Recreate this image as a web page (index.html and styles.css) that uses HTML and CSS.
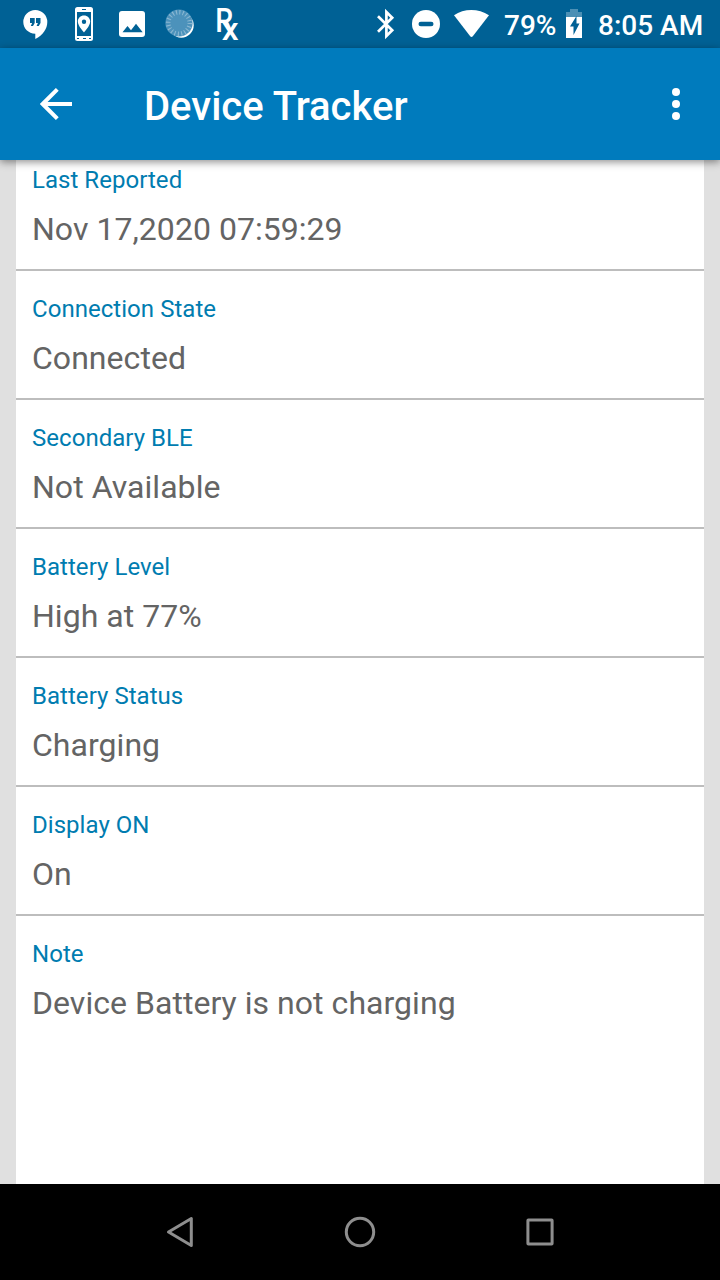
FILE: index.html
```html
<!DOCTYPE html>
<html lang="en">
<head>
<meta charset="utf-8">
<title>Device Tracker</title>
<link rel="stylesheet" href="styles.css">
</head>
<body>
<div class="screen">
  <header class="status-bar">
    <div class="notifications">
      <svg width="48" height="48" viewBox="12 0 48 48"><path fill="#fff" d="M35.300 10a12 12 0 0 0-12 12c0 6.400 5 11.500 12 11.700V39C43 35.300 47.300 28.500 47.300 22a12 12 0 0 0-12-12Z"/><path fill="#006195" d="M30 18h4.700v5l-1.700 3h-2.200l1.300-3H30Zm6 0h4.500v5l-1.700 3h-2.200l1.300-3H36Z"/></svg>
      <svg width="48" height="48" viewBox="60 0 48 48"><rect x="75" y="7" width="18" height="34" rx="2.500" fill="#fff"/><path fill="#006195" d="M77 12h14v24H77ZM82 9h4v1h-4ZM77 38h2v1h-2Zm6 0h3v1h-3Zm6 0h2v1h-2Z"/><path fill="#fff" fill-rule="evenodd" d="M84 15.500c-3.500 0-6.200 2.700-6.200 6.100C77.800 26 84 32.500 84 32.500s6.200-6.500 6.200-10.900c0-3.400-2.700-6.100-6.200-6.100Zm0 4a2.200 2.200 0 1 1 0 4.400 2.200 2.200 0 0 1 0-4.400Z"/></svg>
      <svg width="48" height="48" viewBox="108 0 48 48"><rect x="119" y="11" width="26" height="26" rx="3" fill="#fff"/><path fill="#006195" d="m122.500 32.300 5-6.400 3.500 4.300 5-6.500 6.700 8.600Z"/></svg>
      <svg width="48" height="48" viewBox="156 0 48 48"><circle cx="181.300" cy="25.300" r="12.400" fill="#fff"/><circle cx="179" cy="23" r="13.600" fill="#4c92bb"/><circle cx="179" cy="23" r="10.800" fill="none" stroke="#8bb8d2" stroke-width="4.600" stroke-dasharray="1.100 2.293"/></svg>
      <svg class="rx" width="48" height="48" viewBox="204 0 48 48"><text class="rx-r" transform="translate(215.300 32.300) scale(.84 1)">R</text><text class="rx-x" transform="translate(221.800 39.600) scale(1.080 1)">x</text></svg>
    </div>
    <div class="system">
      <svg width="44" height="48" viewBox="364 0 44 48"><path fill="none" stroke="#fff" stroke-width="2.700" d="m378 16.300 14.200 14L386.400 36V12l5.800 5.700L378 31.800"/></svg>
      <svg width="36" height="48" viewBox="408 0 36 48"><circle cx="426" cy="24" r="14" fill="#fff"/><rect x="418.500" y="21.700" width="15" height="4.600" rx="2.300" fill="#006195"/></svg>
      <svg width="60" height="48" viewBox="444 0 60 48"><path fill="#fff" d="M454 15.200C464 8.200 478.500 8.200 489 15.200L472.800 36.300q-1.300 1.400-2.600 0Z"/></svg>
      <span class="percent">79%</span>
      <svg width="34" height="48" viewBox="560 0 34 48"><path fill="#4c90b5" d="M570 9h8v3h4v5h-16v-5h4Z"/><path fill="#fff" d="M566 17h16v21h-16Z"/><path fill="#006195" d="M576.500 16 570 26.500h3.500V35l6-11.500h-3Z"/></svg>
      <span class="clock">8:05 AM</span>
    </div>
  </header>
  <div class="app-bar">
    <svg class="back" width="32" height="32" viewBox="0 0 32 32"><path fill="none" stroke="#fff" stroke-width="4" d="M32 16H4M17.300 1.400 2.700 16l14.600 14.600"/></svg>
    <h1 class="title">Device Tracker</h1>
    <svg class="more" width="8" height="32" viewBox="0 0 8 32"><g fill="#fff"><circle cx="4" cy="4" r="4"/><circle cx="4" cy="16" r="4"/><circle cx="4" cy="28" r="4"/></g></svg>
  </div>
  <main class="content">
    <dl class="details">
      <div class="row"><dt>Last Reported</dt><dd>Nov 17,2020 07:59:29</dd></div>
      <div class="row"><dt>Connection State</dt><dd>Connected</dd></div>
      <div class="row"><dt>Secondary BLE</dt><dd>Not Available</dd></div>
      <div class="row"><dt>Battery Level</dt><dd>High at 77%</dd></div>
      <div class="row"><dt>Battery Status</dt><dd>Charging</dd></div>
      <div class="row"><dt>Display ON</dt><dd>On</dd></div>
      <div class="row"><dt>Note</dt><dd>Device Battery is not charging</dd></div>
    </dl>
  </main>
  <nav class="nav-bar">
    <svg width="180" height="96" viewBox="90 0 180 96"><path d="M191.300 34.500v27L168.500 48Z"/></svg>
    <svg width="180" height="96" viewBox="270 0 180 96"><circle cx="360" cy="48" r="13.700"/></svg>
    <svg width="180" height="96" viewBox="450 0 180 96"><rect x="527.900" y="35.900" width="24.200" height="24.200" rx=".5"/></svg>
  </nav>
</div>
</body>
</html>
```
FILE: styles.css
```css
* { box-sizing: border-box; }
body { margin: 0; font-family: Roboto, sans-serif; }
svg { display: block; flex: none; }

.screen {
  display: flex;
  flex-direction: column;
  width: 720px;
  height: 1280px;
  overflow: hidden;
  background: #e0e0e0;
}

.status-bar {
  display: flex;
  flex: none;
  justify-content: space-between;
  height: 48px;
  padding-left: 12px;
  background: #006195;
  color: #fff;
  font-size: 28px;
  font-weight: 500;
  line-height: 52px;
  white-space: nowrap;
}
.notifications, .system { display: flex; }
.system { width: 356px; }
.percent { width: 56px; }
.clock { padding-left: 4px; }
.rx { fill: #fff; font-family: Roboto, sans-serif; font-weight: 500; }
.rx-r { font-size: 34px; }
.rx-x { font-size: 31px; }

.app-bar {
  display: flex;
  flex: none;
  align-items: center;
  height: 112px;
  padding: 0 40px;
  background: #007bbd;
  box-shadow: 0 2px 8px rgba(0, 0, 0, .45);
  z-index: 1;
}
.title {
  flex: 1;
  margin: 0 0 0 72px;
  padding-top: 6px;
  color: #fff;
  font-size: 40px;
  font-weight: 500;
  line-height: 48px;
}

.content {
  flex: 1;
  min-height: 0;
  padding: 0 16px;
  overflow: hidden;
}
.details {
  min-height: 1042px;
  margin: -18px 0 0;
  background: #fff;
}
.row {
  height: 129px;
  padding: 24px 16px 20px;
  border-bottom: 2px solid #bdbdbd;
}
.row:last-child { border-bottom: 0; }
.row dt {
  color: #007cb0;
  font-size: 24px;
  letter-spacing: .04px;
  line-height: 28px;
}
.row dd {
  margin: 16px 0 0;
  color: #646464;
  font-size: 32px;
  letter-spacing: .04px;
  line-height: 38px;
}

.nav-bar {
  display: flex;
  flex: none;
  justify-content: center;
  height: 96px;
  background: #000;
  fill: none;
  stroke: #8e8e8e;
  stroke-width: 3;
  stroke-linejoin: round;
}
```
